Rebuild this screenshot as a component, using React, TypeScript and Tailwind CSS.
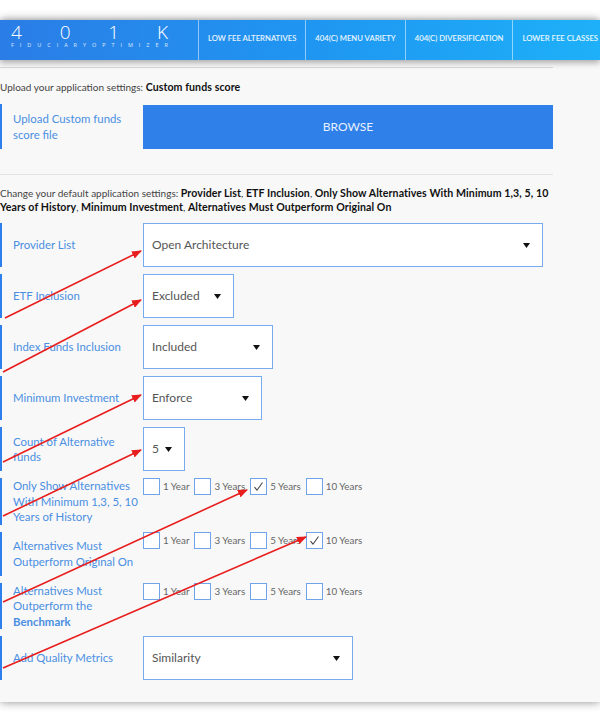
import React from 'react'

const navItems = ['LOW FEE ALTERNATIVES', '404(C) MENU VARIETY', '404(C) DIVERSIFICATION', 'LOWER FEE CLASSES']
const years = ['1 Year', '3 Years', '5 Years', '10 Years']

// annotation arrows drawn over the form
const arrows = [
  [5, 318, 141, 251],
  [3, 372, 141, 300],
  [3, 462, 141, 395],
  [3, 516, 141, 450],
  [3, 602, 247, 490],
  [3, 668, 306, 537],
]

function Caret() {
  return (
    <svg width="7" height="5" viewBox="0 0 7 5" className="shrink-0">
      <path d="M0 0h7L3.5 5z" fill="#111" />
    </svg>
  )
}

function Select({ value, width }: { value: string; width: string }) {
  return (
    <div className={`${width} h-[44px] bg-white border border-[#76abf0] flex items-center justify-between pl-[8px] pr-[12px] text-[12px] text-[#555]`}>
      <span>{value}</span>
      <Caret />
    </div>
  )
}

function Checks({ checked }: { checked?: number }) {
  return (
    <div className="flex items-center">
      {years.map((y, i) => (
        <div key={y} className="flex items-center">
          <div className="w-[17px] h-[17px] bg-white border border-[#6fa4ea] flex items-center justify-center">
            {checked === i && (
              <svg width="11" height="11" viewBox="0 0 11 11">
                <path d="M1.5 6.2 L4 9.2 L9.5 1.5" fill="none" stroke="#444" strokeWidth="1.1" />
              </svg>
            )}
          </div>
          <span className="ml-[3px] mr-[5px] text-[9.8px] text-[#666]">{y}</span>
        </div>
      ))}
    </div>
  )
}

function Row({ label, children, top }: { label: React.ReactNode; children: React.ReactNode; top?: boolean }) {
  return (
    <div className="flex items-stretch">
      <div className="w-[143px] shrink-0 border-l-2 border-[#2d7fee] pl-[11px] pr-1 min-h-[44px] flex items-center text-[11.4px] leading-[15.5px] text-[#4a8fe2]">
        <div>{label}</div>
      </div>
      <div className={`flex ${top ? 'items-start' : 'items-center'}`}>{children}</div>
    </div>
  )
}

const B = ({ children }: { children: React.ReactNode }) => (
  <b className="text-[#111] text-[10.6px] leading-[13px] tracking-[0.08px]">{children}</b>
)

export default function App() {
  return (
    <div className="relative min-h-[724px] bg-white pt-[20px] overflow-hidden font-['Lato',sans-serif]">
      <div className="bg-[#f8f8f8] shadow-[0_0_9px_rgba(0,0,0,0.45)] pb-[22px]">
        <header className="relative z-10 h-[40px] flex bg-gradient-to-r from-[#2a7de6] via-[#1f95f1] to-[#1eb0f8] shadow-[0_3px_6px_rgba(0,0,0,0.3)]">
          <div className="w-[199px] shrink-0 border-r border-white/50 pl-[11px] pr-[30px] pt-[2px]">
            <div className="flex justify-between text-white text-[19px] font-light leading-[20px] font-['Open_Sans',sans-serif]">
              {['4', '0', '1', 'K'].map(c => <span key={c}>{c}</span>)}
            </div>
            <div className="flex justify-between text-white/80 text-[5.5px] leading-[7px] font-['Open_Sans',sans-serif]">
              {'FIDUCIARYOPTIMIZER'.split('').map((c, i) => <span key={i}>{c}</span>)}
            </div>
          </div>
          {navItems.map((n, i) => (
            <div key={n} className={`shrink-0 flex items-center pb-[3px] px-[9px] text-[7.7px] font-semibold text-white/90 whitespace-nowrap ${i < navItems.length - 1 ? 'border-r border-white/50' : ''}`}>
              {n}
            </div>
          ))}
        </header>

        <div className="w-[553px]">
          <div className="mt-[7px] h-px bg-[#d8d8d8]" />
          <p className="mt-[12px] text-[10px] leading-[14px] text-[#444]">
            Upload your application settings: <B>Custom funds score</B>
          </p>

          <div className="mt-[10px] flex items-stretch h-[45px]">
            <div className="w-[143px] shrink-0 border-l-2 border-[#2d7fee] pl-[11px] pr-2 flex items-center text-[11.4px] leading-[16px] text-[#4a8fe2]">
              Upload Custom funds score file
            </div>
            <div className="flex-1 mt-[1px] bg-[#2f80e8] flex items-center justify-center text-[12px] text-[#e8f1ff]">BROWSE</div>
          </div>

          <div className="mt-[25px] h-px bg-[#e2e2e2]" />
          <p className="mt-[12px] text-[10px] leading-[13.5px] text-[#444]">
            Change your default application settings: <B>Provider List</B>, <B>ETF Inclusion</B>, <B>Only Show Alternatives With Minimum 1,3, 5, 10 Years of History</B>, <B>Minimum Investment</B>, <B>Alternatives Must Outperform Original On</B>
          </p>

          <div className="mt-[9px] flex flex-col gap-[7px]">
            <Row label="Provider List"><Select value="Open Architecture" width="w-[400px]" /></Row>
            <Row label="ETF Inclusion"><Select value="Excluded" width="w-[91px]" /></Row>
            <Row label="Index Funds Inclusion"><Select value="Included" width="w-[130px]" /></Row>
            <Row label="Minimum Investment"><Select value="Enforce" width="w-[119px]" /></Row>
            <Row label="Count of Alternative funds"><Select value="5" width="w-[42px]" /></Row>
            <Row top label="Only Show Alternatives With Minimum 1,3, 5, 10 Years of History"><Checks checked={2} /></Row>
            <Row top label="Alternatives Must Outperform Original On"><Checks checked={3} /></Row>
            <Row top label={<>Alternatives Must Outperform the <b>Benchmark</b></>}><Checks /></Row>
            <Row label="Add Quality Metrics"><Select value="Similarity" width="w-[210px]" /></Row>
          </div>
        </div>
      </div>

      <svg className="absolute inset-0 pointer-events-none" width="600" height="724">
        <defs>
          <marker id="ah" markerUnits="userSpaceOnUse" markerWidth="10" markerHeight="8" refX="9" refY="4" orient="auto">
            <path d="M0 0L10 4L0 8z" fill="#e81e1e" />
          </marker>
        </defs>
        {arrows.map(([x1, y1, x2, y2], i) => (
          <line key={i} x1={x1} y1={y1} x2={x2} y2={y2} stroke="#e81e1e" strokeWidth="1.6" markerEnd="url(#ah)" />
        ))}
      </svg>
    </div>
  )
}
